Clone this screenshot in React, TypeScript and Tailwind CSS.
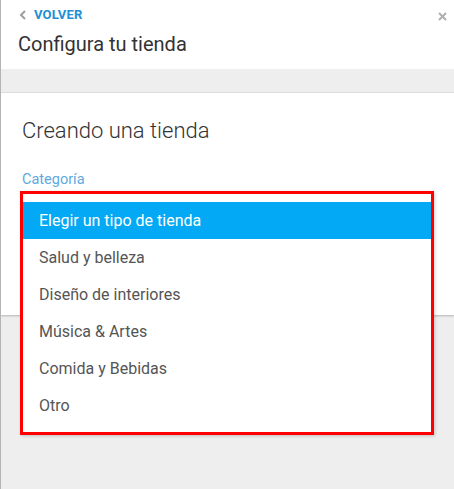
import React from 'react';

const categories = ['Elegir un tipo de tienda', 'Salud y belleza', 'Diseño de interiores', 'Música & Artes', 'Comida y Bebidas', 'Otro'];

const App: React.FC = () => {
	return (
		<div className="h-[489px] w-[454px] flex flex-col bg-[#eeeeee] border-l border-[#b4b4b4] overflow-hidden" style={{ fontFamily: 'Roboto, "Liberation Sans", sans-serif' }}>
			{/* header */}
			<div className="h-[69px] bg-white px-[17px] pt-[7px] relative">
				<div className="flex items-center gap-[7px] h-4">
					<svg width="8" height="10" viewBox="0 0 8 10" className="ml-[1px]">
						<path d="M6 1 L2 5 L6 9" fill="none" stroke="#9e9e9e" strokeWidth="2" />
					</svg>
					<span className="text-[13px] font-bold text-[#1e8fd6] tracking-[0.2px]">VOLVER</span>
				</div>
				<h1 className="mt-[9px] text-[20px] leading-[24px] text-[#333]">Configura tu tienda</h1>
				<svg width="9" height="9" viewBox="0 0 9 9" className="absolute right-[7px] top-[12px]">
					<path d="M1 1 L8 8 M8 1 L1 8" stroke="#b0b0b0" strokeWidth="2" />
				</svg>
			</div>
			<div className="h-[24px] border-b border-[#e0e0e0]" />

			{/* card */}
			<div className="h-[222px] bg-white shadow-[0_1px_2px_rgba(0,0,0,0.25)] px-[21px] pt-[24px]">
				<h2 className="text-[22px] leading-[28px] font-light text-[#333]">Creando una tienda</h2>
				<p className="mt-[26px] text-[14.5px] leading-[17px] text-[#5ea9e0]">Categoría</p>
				<div className="relative">
					<ul className="absolute left-[-2px] top-[3px] w-[414px] bg-white border-[3px] border-[#ff0000] py-[8px] shadow-[1px_1px_3px_rgba(0,0,0,0.2)] z-10">
						{categories.map((c, i) => (
							<li key={c} className={i === 0 ? 'h-[37px] flex items-center pl-[16px] text-[16px] text-white bg-[#03a9f4]' : 'h-[37px] flex items-center pl-[16px] text-[16px] text-[#555]'}>
								{c}
							</li>
						))}
					</ul>
				</div>
			</div>
		</div>
	);
};

export default App;
